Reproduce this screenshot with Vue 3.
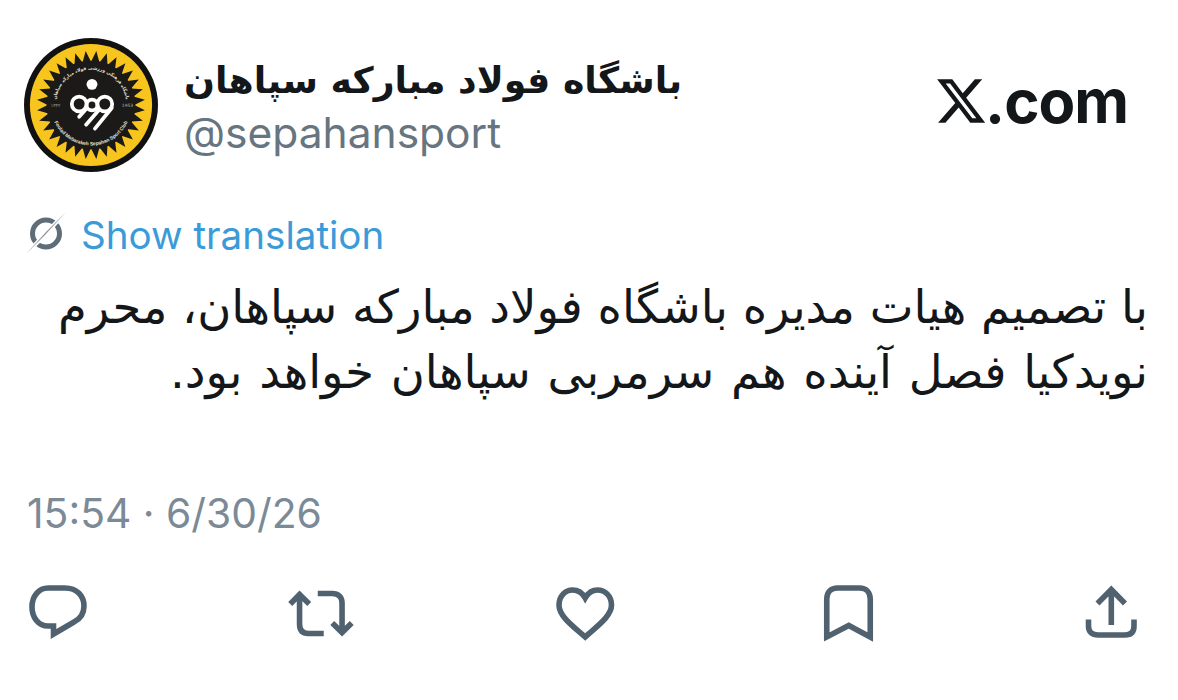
<script setup>
const actions = ['comment', 'retweet', 'heart', 'bookmark', 'share']
const viewBoxes = {
  comment: '0 0 80 70',
  retweet: '3.75 0 80 70',
  heart: '2.5 0 80 70',
  bookmark: '1.25 0 80 70',
  share: '0 0 80 70',
}
const spikes = Array.from({ length: 32 }, (_, i) => {
  const a = (i / 32) * Math.PI * 2
  const b = ((i + 0.5) / 32) * Math.PI * 2
  const c = ((i + 1) / 32) * Math.PI * 2
  const p = (r, t) => `${(68 + r * Math.cos(t)).toFixed(1)},${(68 + r * Math.sin(t)).toFixed(1)}`
  return `${p(44, a)} ${p(55, b)} ${p(44, c)}`
}).join(' ')
</script>

<template>
  <main class="tweet">
    <header class="top">
      <svg class="avatar" viewBox="0 0 136 136">
        <defs>
          <path id="arcTop" d="M32 68a36 36 0 0 1 72 0" />
          <path id="arcBottom" d="M27 68a41 41 0 0 0 82 0" />
        </defs>
        <circle cx="68" cy="68" r="68" fill="#111" />
        <circle cx="68" cy="68" r="62" fill="#f7c51e" />
        <polygon :points="spikes" fill="#1c1a18" />
        <circle cx="68" cy="68" r="45" fill="#1c1a18" />
        <text class="ring-text" fill="#e6e2d4"><textPath href="#arcTop" startOffset="50%" text-anchor="middle">باشگاه فرهنگی ورزشی فولاد مبارکه سپاهان</textPath></text>
        <text class="ring-latin" fill="#e6e2d4"><textPath href="#arcBottom" startOffset="50%" text-anchor="middle">Foolad Mobarakeh Sepahan Sport Club</textPath></text>
        <text class="year" x="32" y="70" text-anchor="middle" fill="#b9b5a8">۱۳۳۲</text>
        <text class="year" x="105" y="70" text-anchor="middle" fill="#b9b5a8">1953</text>
        <circle cx="69" cy="47" r="5.5" fill="#fff" />
        <g fill="none" stroke="#fff" stroke-width="3.8" stroke-linecap="round">
          <circle cx="56" cy="67" r="7.5" />
          <circle cx="69" cy="68" r="5.5" />
          <circle cx="82" cy="67" r="7.5" />
          <path d="M89 71 72 92M76 73 63 88M63 72 56 80" />
        </g>
      </svg>
      <div class="names">
        <div class="name">باشگاه فولاد مبارکه سپاهان</div>
        <div class="handle">@sepahansport</div>
      </div>
      <div class="xcom">
        <svg class="xlogo" viewBox="1.2 2.2 21.6 19.6"><path fill="#14171a" d="M18.244 2.25h3.308l-7.227 8.26 8.502 11.24H16.17l-5.214-6.817L4.99 21.75H1.68l7.73-8.835L1.254 2.25H8.08l4.713 6.231zm-1.161 17.52h1.833L7.084 4.126H5.117z" /></svg>
        <span>.com</span>
      </div>
    </header>

    <div class="translate">
      <svg class="globe" viewBox="0 0 50 50">
        <circle cx="26" cy="23.5" r="13.5" fill="none" stroke="#5f6d78" stroke-width="5" />
        <path d="M47 1 27 21 5 45 25 26Z" fill="#fff" stroke="#fff" stroke-width="3" />
        <path d="M46 2 26 22 6 44 25 25Z" fill="#8b959d" />
      </svg>
      <span>Show translation</span>
    </div>

    <p class="body" dir="rtl">با تصمیم هیات مدیره باشگاه فولاد مبارکه سپاهان، محرم<br /><span class="second">نویدکیا فصل آینده هم سرمربی سپاهان خواهد بود.</span></p>

    <div class="time">15:54 · 6/30/26</div>

    <footer class="actions">
      <svg v-for="name in actions" :key="name" class="icon" :viewBox="viewBoxes[name]">
        <path v-if="name === 'comment'" d="M28 8H45C57 8 64 16 64 26 64 34 60 39 54 42L33.5 54V46H28C18 46 12 37 12 27 12 16 19 8 28 8Z" />
        <g v-else-if="name === 'retweet'">
          <path d="M11 24 20.3 14.5 30 24M20.3 15V44C20.3 50 23 53.5 29 53.5H44.5" />
          <path d="M53 43 62.8 52.5 72.5 43M62.8 52V23C62.8 17 59 13.5 53 13.5H38.5" />
        </g>
        <path v-else-if="name === 'heart'" d="M40.7 57C31 48 14.5 37 14.5 25 14.5 16 21 10 28 10 33 10 38 13 40.7 18 43.5 13 48 10 53 10 60.5 10 67 16 67 25 67 37 50 48 40.7 57Z" />
        <path v-else-if="name === 'bookmark'" d="M18 57V19C18 12 22 8 29 8H51C57 8 61.5 12 61.5 19V57L40 45.5Z" />
        <path v-else d="M38.3 45V9.5M24.5 23.5 38.3 9.5 52 23.5M15.5 39.5V46C15.5 52 19 55 25 55H52C58 55 61 52 61 46V39.5" />
      </svg>
    </footer>
  </main>
</template>

<style scoped>
.tweet {
  width: 1178px;
  height: 700px;
  box-sizing: border-box;
  padding: 38px 30px 0 24px;
  background: #fff;
  font-family: Inter, "Liberation Sans", sans-serif;
  overflow: hidden;
}

.top {
  display: flex;
  align-items: center;
}

.avatar {
  width: 134px;
  height: 134px;
  flex-shrink: 0;
}

.ring-text {
  font-family: "DejaVu Sans", sans-serif;
  font-size: 4.6px;
  font-weight: 700;
}

.ring-latin {
  font-family: "Liberation Sans", sans-serif;
  font-size: 5px;
  font-weight: 700;
}

.year {
  font-family: "DejaVu Sans", sans-serif;
  font-size: 4.5px;
}

.names {
  align-self: flex-start;
  margin: 20px 0 0 26px;
  display: flex;
  flex-direction: column;
  align-items: flex-start;
}

.name {
  font-family: "DejaVu Sans", sans-serif;
  font-size: 36.3px;
  font-weight: 700;
  line-height: 46px;
  color: #14171a;
  direction: rtl;
  white-space: nowrap;
}

.handle {
  font-size: 42.5px;
  line-height: 48px;
  color: #66757f;
  margin-top: 5px;
}

.xcom {
  margin: 0 20px 8px auto;
  display: flex;
  align-items: baseline;
  font-size: 60px;
  font-weight: 700;
  letter-spacing: -1px;
  color: #14171a;
}

.xlogo {
  width: 48px;
  height: 44px;
}

.translate {
  display: flex;
  align-items: center;
  gap: 11px;
  margin: 38px 0 0 -4px;
  font-size: 38.6px;
  line-height: 50px;
  color: #3b9bd9;
}

.globe {
  width: 50px;
  height: 50px;
}

.body {
  margin: 15px 0 0;
  font-family: "DejaVu Sans", sans-serif;
  font-size: 46.5px;
  line-height: 65px;
  color: #14171a;
  white-space: nowrap;
}

.second {
  word-spacing: 2px;
}

.time {
  margin: 85px 0 0 3px;
  font-size: 40.8px;
  line-height: 46px;
  color: #7b8a96;
}

.actions {
  display: flex;
  justify-content: space-between;
  margin: 44px -5px 0 -4px;
}

.icon {
  width: 80px;
  height: 70px;
  fill: none;
  stroke: #50626f;
  stroke-width: 5.6;
}
</style>
